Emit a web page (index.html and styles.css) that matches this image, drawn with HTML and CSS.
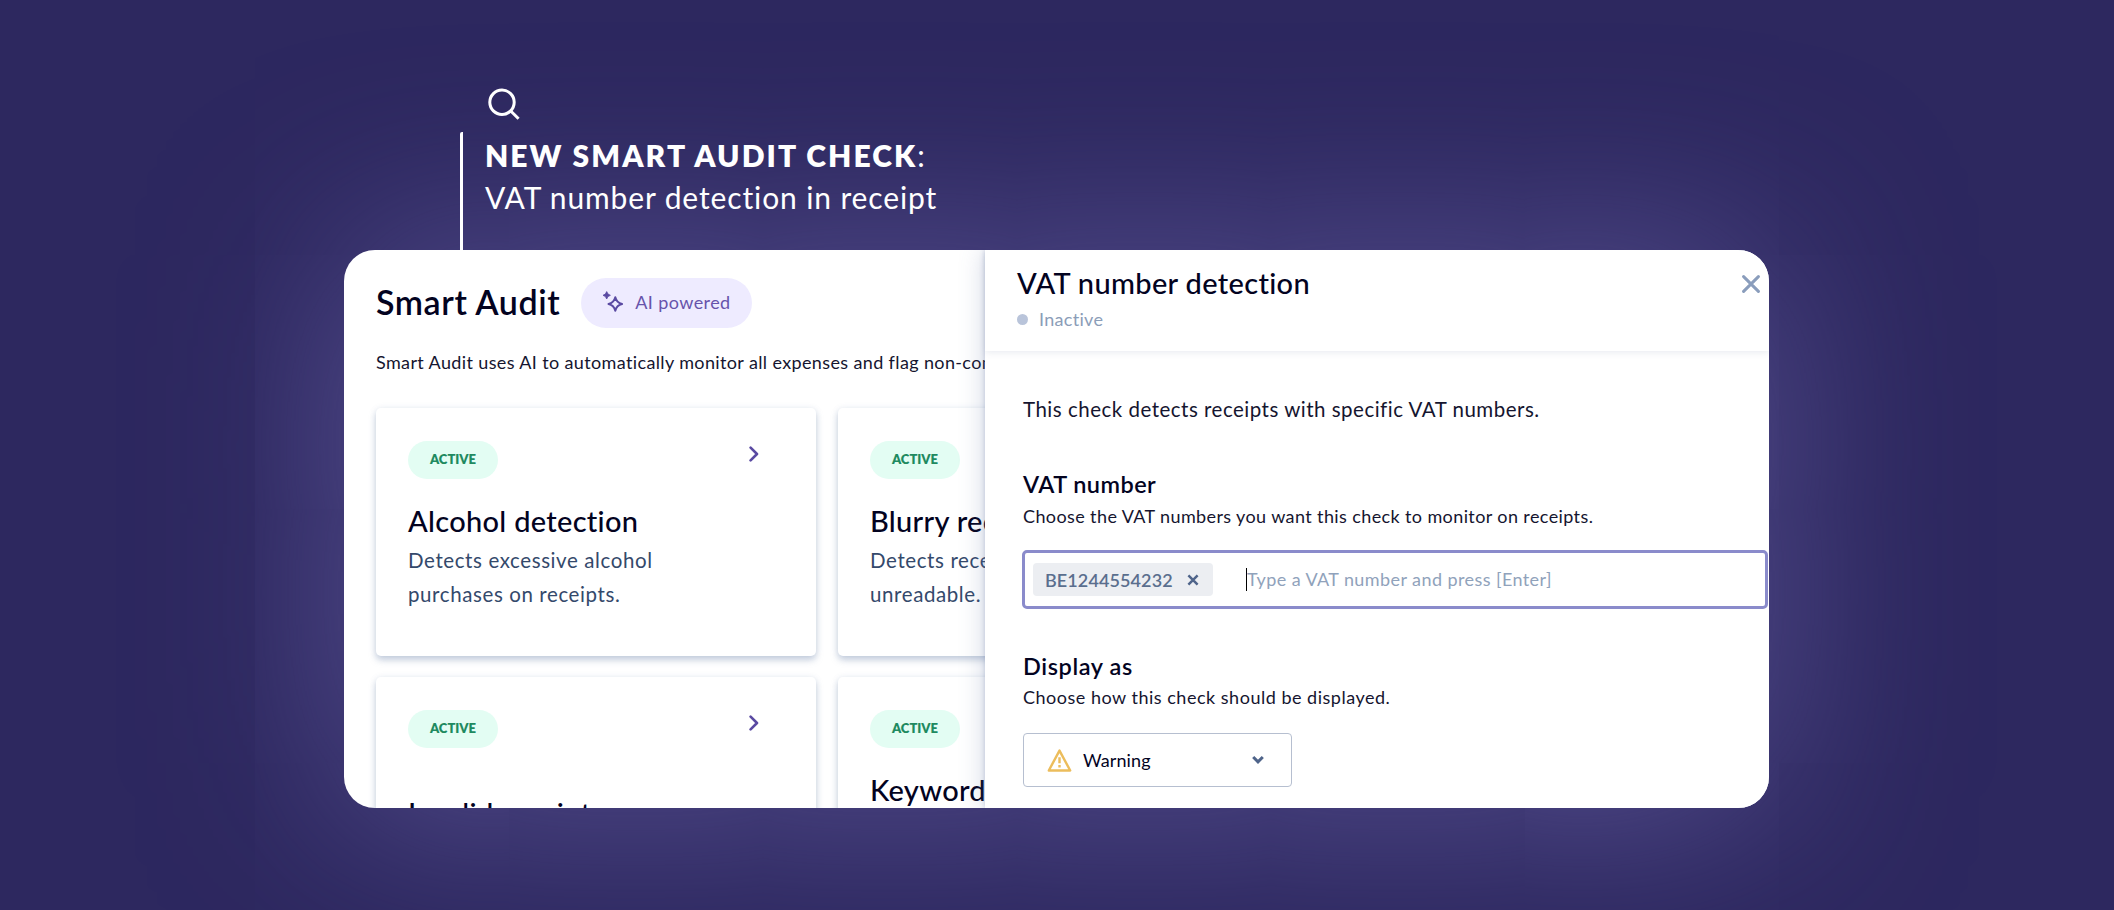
FILE: index.html
```
<!DOCTYPE html>
<html lang="en">

<head>
    <meta charset="UTF-8">
    <meta name="viewport" content="width=device-width, initial-scale=1.0">
    <title>Smart Audit</title>

    <link rel="stylesheet" href="styles.css">
</head>

<body>

    <header class="intro">
        <svg class="search-icon" width="36" height="36" viewBox="0 0 36 36" fill="none" stroke="#fff" stroke-width="3">
            <circle cx="16" cy="16.3" r="12.2" />
            <path d="M25 25.2L32.6 32.7" />
        </svg>
        <div class="intro-text">
            <h1><strong>NEW SMART AUDIT CHECK</strong>:</h1>
            <p>VAT number detection in receipt</p>
        </div>
    </header>

    <main class="window">
        <section class="audit">
            <div class="audit-title">
                <h2>Smart Audit</h2>
                <div class="ai-badge">
                    <svg width="22" height="22" viewBox="0 0 22 22">
                        <path d="M12.3 6.2Q13.6 11.7 19.1 13Q13.6 14.3 12.3 19.8Q11 14.3 5.5 13Q11 11.7 12.3 6.2Z" fill="none" stroke="#5a4aa2" stroke-width="2" stroke-linejoin="round" />
                        <path d="M3.7 .6Q4.4 3.6 7.4 4.3Q4.4 5 3.7 8Q3 5 0 4.3Q3 3.6 3.7 .6Z" fill="#5a4aa2" stroke="#5a4aa2" stroke-width=".8" />
                    </svg>
                    <span>AI powered</span>
                </div>
            </div>
            <p class="audit-text">Smart Audit uses AI to automatically monitor all expenses and flag non-compliant</p>

            <div class="cards">
                <div class="card">
                    <div class="card-top">
                        <span class="active">ACTIVE</span>
                        <svg class="chevron" width="10" height="16" viewBox="0 0 10 16"><path d="M1.6 1.6L8 8L1.6 14.4" /></svg>
                    </div>
                    <h3>Alcohol detection</h3>
                    <p>Detects excessive alcohol<br>purchases on receipts.</p>
                </div>
                <div class="card">
                    <div class="card-top">
                        <span class="active">ACTIVE</span>
                    </div>
                    <h3>Blurry receipt</h3>
                    <p>Detects receipts that are<br>unreadable.</p>
                </div>
                <div class="card">
                    <div class="card-top">
                        <span class="active">ACTIVE</span>
                        <svg class="chevron" width="10" height="16" viewBox="0 0 10 16"><path d="M1.6 1.6L8 8L1.6 14.4" /></svg>
                    </div>
                    <h3 class="low">Invalid receipt</h3>
                </div>
                <div class="card">
                    <div class="card-top">
                        <span class="active">ACTIVE</span>
                    </div>
                    <h3>Keyword</h3>
                </div>
            </div>
        </section>

        <!-- Side panel, slides over the list of checks -->
        <aside class="panel">
            <div class="panel-header">
                <div>
                    <h2>VAT number detection</h2>
                    <div class="status"><span class="dot"></span>Inactive</div>
                </div>
                <svg class="close" width="18" height="18" viewBox="0 0 18 18"><path d="M1.6 1.6L16.4 16.4M16.4 1.6L1.6 16.4" /></svg>
            </div>

            <div class="panel-body">
                <p class="lead">This check detects receipts with specific VAT numbers.</p>

                <h4>VAT number</h4>
                <p class="hint">Choose the VAT numbers you want this check to monitor on receipts.</p>
                <div class="vat-input">
                    <span class="chip">
                        <span>BE1244554232</span>
                        <svg width="12" height="12" viewBox="0 0 12 12"><path d="M1.4 1.4L10.6 10.6M10.6 1.4L1.4 10.6" /></svg>
                    </span>
                    <span class="placeholder">Type a VAT number and press [Enter]</span>
                </div>

                <h4 class="display-as">Display as</h4>
                <p class="hint hint-short">Choose how this check should be displayed.</p>
                <div class="select">
                    <svg width="25" height="25" viewBox="0 0 25 25" fill="none" stroke="#ecbd5c" stroke-width="2.4">
                        <path d="M12.5 2.6L23.2 22.5H1.8Z" stroke-linejoin="round" />
                        <path d="M12.5 9.2V15.2M12.5 17V19.4" />
                    </svg>
                    <span>Warning</span>
                    <svg class="arrow" width="12" height="10" viewBox="0 0 12 10"><path d="M1.2 2L6 6.9L10.8 2" /></svg>
                </div>
            </div>
        </aside>
    </main>

</body>

</html>
```
FILE: styles.css
```
* {
    box-sizing: border-box;
    padding: 0;
    margin: 0;
}

body {
    background: #2d285f;
    font-family: Lato, "Liberation Sans", sans-serif;
    color: #03031f;
    width: 2114px;
    height: 910px;
    padding: 86px 345px 0 344px;
    overflow: hidden;
}

svg {
    display: block;
    flex-shrink: 0;
}

/* Intro Styling */
.intro {
    position: relative;
    z-index: 1;
    height: 164px;
    padding-left: 116px;
    color: #fff;
}

.search-icon {
    margin-left: 26px;
}

.intro-text {
    margin-top: 10px;
    height: 118px;
    border-left: 3px solid #fff;
    border-top-left-radius: 2px;
    padding: 2px 0 0 22px;
    font-size: 30px;
    line-height: 42px;
}

.intro-text h1 {
    font-size: 30px;
    font-weight: 400;
}

.intro-text strong {
    font-weight: 800;
    letter-spacing: 2.06px;
}

.intro-text p {
    letter-spacing: .87px;
}

/* Window Styling */
.window {
    position: relative;
    height: 558px;
    border-radius: 31px;
    background: #fff;
    box-shadow: 0 0 190px #5c5597;
    overflow: hidden;
}

.audit {
    width: 940px;
    padding: 28px 0 0 32px;
}

.audit-title {
    display: flex;
    align-items: center;
    gap: 21px;
    height: 50px;
}

.audit-title h2 {
    padding-bottom: 4px;
    font-size: 34px;
    font-weight: 600;
    letter-spacing: .58px;
}

.ai-badge {
    display: flex;
    align-items: center;
    gap: 10px;
    width: 171px;
    height: 50px;
    padding: 0 0 2px 22px;
    border-radius: 25px;
    background: #eeebff;
    color: #6753ab;
    font-size: 18px;
    letter-spacing: .4px;
}

.audit-text {
    margin-top: 21px;
    font-size: 18px;
    line-height: 26px;
    letter-spacing: .37px;
    white-space: nowrap;
    color: #15152f;
}

/* Cards Styling */
.cards {
    display: grid;
    grid-template-columns: 440px 440px;
    grid-auto-rows: 248px;
    gap: 21px 22px;
    margin-top: 33px;
}

.card {
    padding: 33px 57px 0 32px;
    border-radius: 5px;
    background: #fff;
    box-shadow: 0 4px 7px rgba(112, 134, 172, .4), 0 0 6px rgba(112, 134, 172, .1);
}

.card-top {
    display: flex;
    justify-content: space-between;
}

.active {
    width: 90px;
    height: 38px;
    border-radius: 19px;
    background: #e3fdf3;
    color: #1f8a60;
    font-size: 13px;
    font-weight: 800;
    line-height: 37px;
    text-align: center;
}

.chevron {
    margin-top: 5px;
    fill: none;
    stroke: #5a4aa2;
    stroke-width: 2.6;
    stroke-linecap: round;
    stroke-linejoin: round;
}

.card h3 {
    margin-top: 25px;
    font-size: 29px;
    font-weight: 500;
    line-height: 34px;
    letter-spacing: .3px;
    white-space: nowrap;
}

.card h3.low {
    margin-top: 48px;
}

.card p {
    margin-top: 5px;
    font-size: 20.5px;
    line-height: 34px;
    letter-spacing: .6px;
    white-space: nowrap;
    color: #34496b;
}

/* Panel Styling */
.panel {
    position: absolute;
    top: 0;
    right: 0;
    bottom: 0;
    width: 784px;
    background: #fff;
    box-shadow: 0 0 24px rgba(90, 110, 160, .3), 0 0 5px rgba(90, 110, 160, .3);
}

.panel-header {
    display: flex;
    justify-content: space-between;
    height: 101px;
    padding: 15px 9px 0 32px;
    box-shadow: 0 2px 6px rgba(90, 110, 150, .12);
}

.panel-header h2 {
    font-size: 29px;
    font-weight: 500;
    line-height: 35px;
    letter-spacing: .33px;
}

.status {
    display: flex;
    align-items: center;
    gap: 11px;
    margin-top: 6px;
    font-size: 18px;
    line-height: 26px;
    letter-spacing: .3px;
    color: #8b9db8;
}

.dot {
    width: 11px;
    height: 11px;
    border-radius: 50%;
    background: #b9c4da;
}

.close {
    margin-top: 10px;
    stroke: #8a9dbc;
    stroke-width: 3;
    stroke-linecap: round;
}

.panel-body {
    padding: 43px 0 0 38px;
}

.lead {
    margin-bottom: 45px;
    font-size: 20.5px;
    line-height: 30px;
    letter-spacing: .5px;
    color: #15152f;
}

.panel-body h4 {
    font-size: 23.5px;
    font-weight: 600;
    line-height: 31px;
    letter-spacing: .45px;
}

.panel-body h4.display-as {
    margin-top: 42px;
    line-height: 30px;
    letter-spacing: .6px;
}

.hint {
    margin-top: 3px;
    font-size: 18px;
    line-height: 26px;
    letter-spacing: .39px;
    color: #15152f;
}

.hint-short {
    letter-spacing: .51px;
}

.vat-input {
    display: flex;
    align-items: center;
    width: 746px;
    height: 59px;
    margin: 21px 0 0 -1px;
    padding-left: 8px;
    border: 3px solid #8a8bcb;
    border-radius: 5px;
    font-size: 18px;
}

.chip {
    display: flex;
    align-items: center;
    gap: 14px;
    width: 180px;
    height: 33px;
    padding-left: 12px;
    border-radius: 4px;
    background: #eceef2;
    color: #5a6e8e;
    font-weight: 600;
    letter-spacing: .1px;
}

.chip svg {
    stroke: #4f648a;
    stroke-width: 2.5;
}

.placeholder {
    margin-left: 33px;
    border-left: 1px solid #000;
    line-height: 23px;
    letter-spacing: .42px;
    color: #90a2bb;
}

.select {
    display: flex;
    align-items: center;
    width: 269px;
    height: 54px;
    margin-top: 23px;
    padding: 0 27px 0 23px;
    border: 1px solid #b6bfd0;
    border-radius: 4px;
    font-size: 18px;
}

.select span {
    margin-left: 11px;
    padding-bottom: 1px;
    letter-spacing: .1px;
}

.arrow {
    margin-left: auto;
    fill: none;
    stroke: #4f648a;
    stroke-width: 3;
}
```
